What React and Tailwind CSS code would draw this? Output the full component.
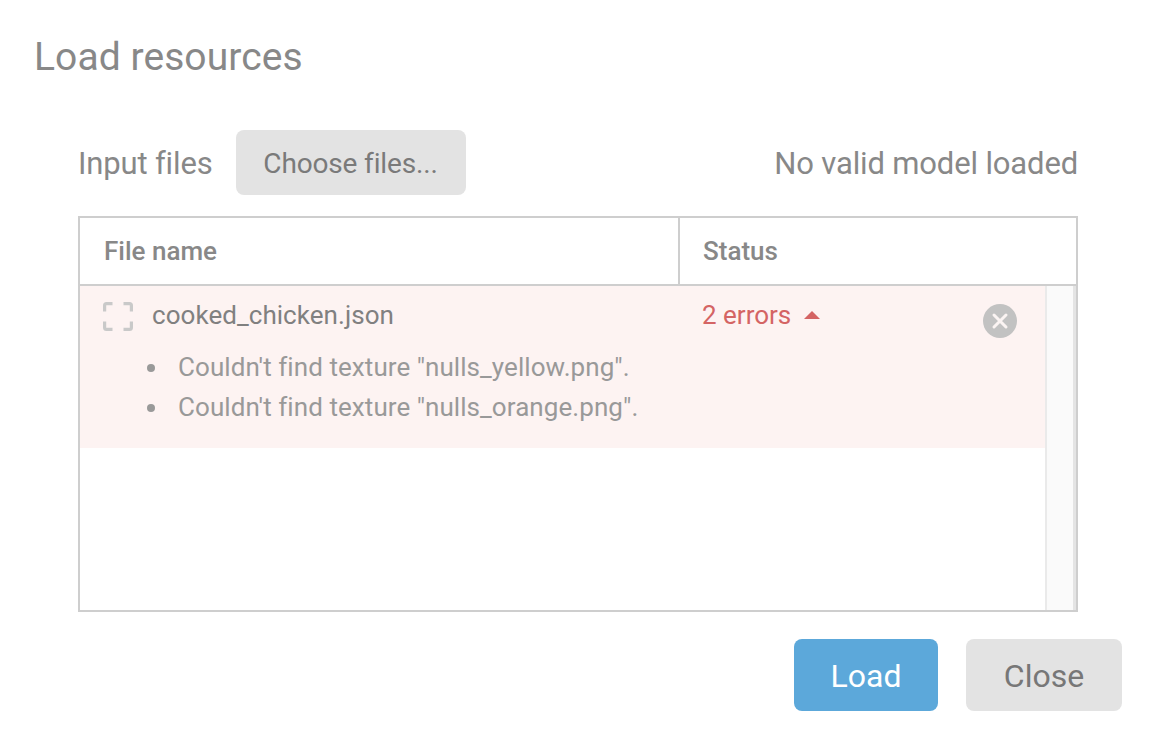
import React from 'react';

function FileIcon() {
  return (
    <svg width="30" height="29" viewBox="0 0 30 29" fill="none" stroke="#c9c9c9" strokeWidth="3.2" className="shrink-0">
      <path d="M1.600 9.500V3.500Q1.600 1.600 3.500 1.600H9.500" />
      <path d="M20.500 1.600H26.500Q28.400 1.600 28.400 3.500V9.500" />
      <path d="M1.600 19.500V25.500Q1.600 27.400 3.500 27.400H9.500" />
      <path d="M20.500 27.400H26.500Q28.400 27.400 28.400 25.500V19.500" />
    </svg>
  );
}

function RemoveIcon() {
  return (
    <svg width="34" height="34" viewBox="0 0 34 34">
      <circle cx="17" cy="17" r="17" fill="#c2c2c2" />
      <path d="M11 11L23 23M23 11L11 23" stroke="#fbf4f3" strokeWidth="3" strokeLinecap="round" />
    </svg>
  );
}

export default function App() {
  return (
    <div className="w-[1152px] h-[746px] overflow-hidden bg-white text-[#888888] font-['Roboto',sans-serif]">
      <div className="pl-[34px] pt-[35px]">
        <h1 className="text-[39px] leading-[44px] font-normal tracking-[0.07px]">Load resources</h1>
      </div>

      <div className="mx-[74px] ml-[78px] mt-[51px]">
        <div className="flex items-center justify-between h-[65px]">
          <div className="flex items-center">
            <span className="text-[31px] mr-[23px] pt-[3px] tracking-[-0.15px]">Input files</span>
            <button className="h-[65px] w-[230px] rounded-[8px] bg-[#e3e3e3] text-[28px] pt-[2px] tracking-[-0.15px] text-[#7a7a7a]">Choose files...</button>
          </div>
          <span className="text-[31px] pt-[3px] tracking-[-0.15px]">No valid model loaded</span>
        </div>

        <div className="mt-[21px] h-[396px] border-2 border-[#cecece] flex flex-col">
          <div className="flex h-[68px] shrink-0 border-b-2 border-[#cecece] text-[26px] font-medium">
            <div className="w-[600px] border-r-2 border-[#cecece] pl-[24px] flex items-center">File name</div>
            <div className="flex-1 pl-[23px] flex items-center">Status</div>
          </div>
          <div className="flex flex-1 min-h-0">
            <div className="flex-1">
              <div className="h-[162px] bg-[#fdf3f2] relative">
                <div className="flex">
                  <div className="w-[600px] pl-[23px] pt-[13px] flex items-start">
                    <div className="pt-[3px]">
                      <FileIcon />
                    </div>
                    <span className="ml-[19px] text-[26px] leading-[32px] tracking-[0.05px] text-[#808080]">cooked_chicken.json</span>
                  </div>
                  <div className="pl-[22px] pt-[13px] flex items-center h-[45px] text-[26px] leading-[32px] text-[#d46464]">
                    <span>2 errors</span>
                    <span className="ml-[13px] w-0 h-0 border-x-[8px] border-x-transparent border-b-[8px] border-b-[#d46464]"></span>
                  </div>
                </div>
                <ul className="mt-[16px] pl-[98px] list-disc marker:text-[#999999] text-[26px] leading-[40px] tracking-[0.07px] text-[#999999]">
                  <li className="pl-[8px] -ml-[8px]">Couldn't find texture "nulls_yellow.png".</li>
                  <li className="pl-[8px] -ml-[8px]">Couldn't find texture "nulls_orange.png".</li>
                </ul>
                <div className="absolute left-[903px] top-[18px]">
                  <RemoveIcon />
                </div>
              </div>
            </div>
            <div className="w-[31px] border-l-2 border-[#eaeaea] bg-[#fafafa] border-r-[3px] border-r-[#e4e4e4]"></div>
          </div>
        </div>

        <div className="flex justify-end mt-[27px] mr-[-44px] gap-[28px]">
          <button className="w-[144px] h-[72px] rounded-[8px] bg-[#5ca8da] text-white text-[32px] pt-[2px]">Load</button>
          <button className="w-[156px] h-[72px] rounded-[8px] bg-[#e3e3e3] text-[#777777] text-[32px] pt-[2px]">Close</button>
        </div>
      </div>
    </div>
  );
}
